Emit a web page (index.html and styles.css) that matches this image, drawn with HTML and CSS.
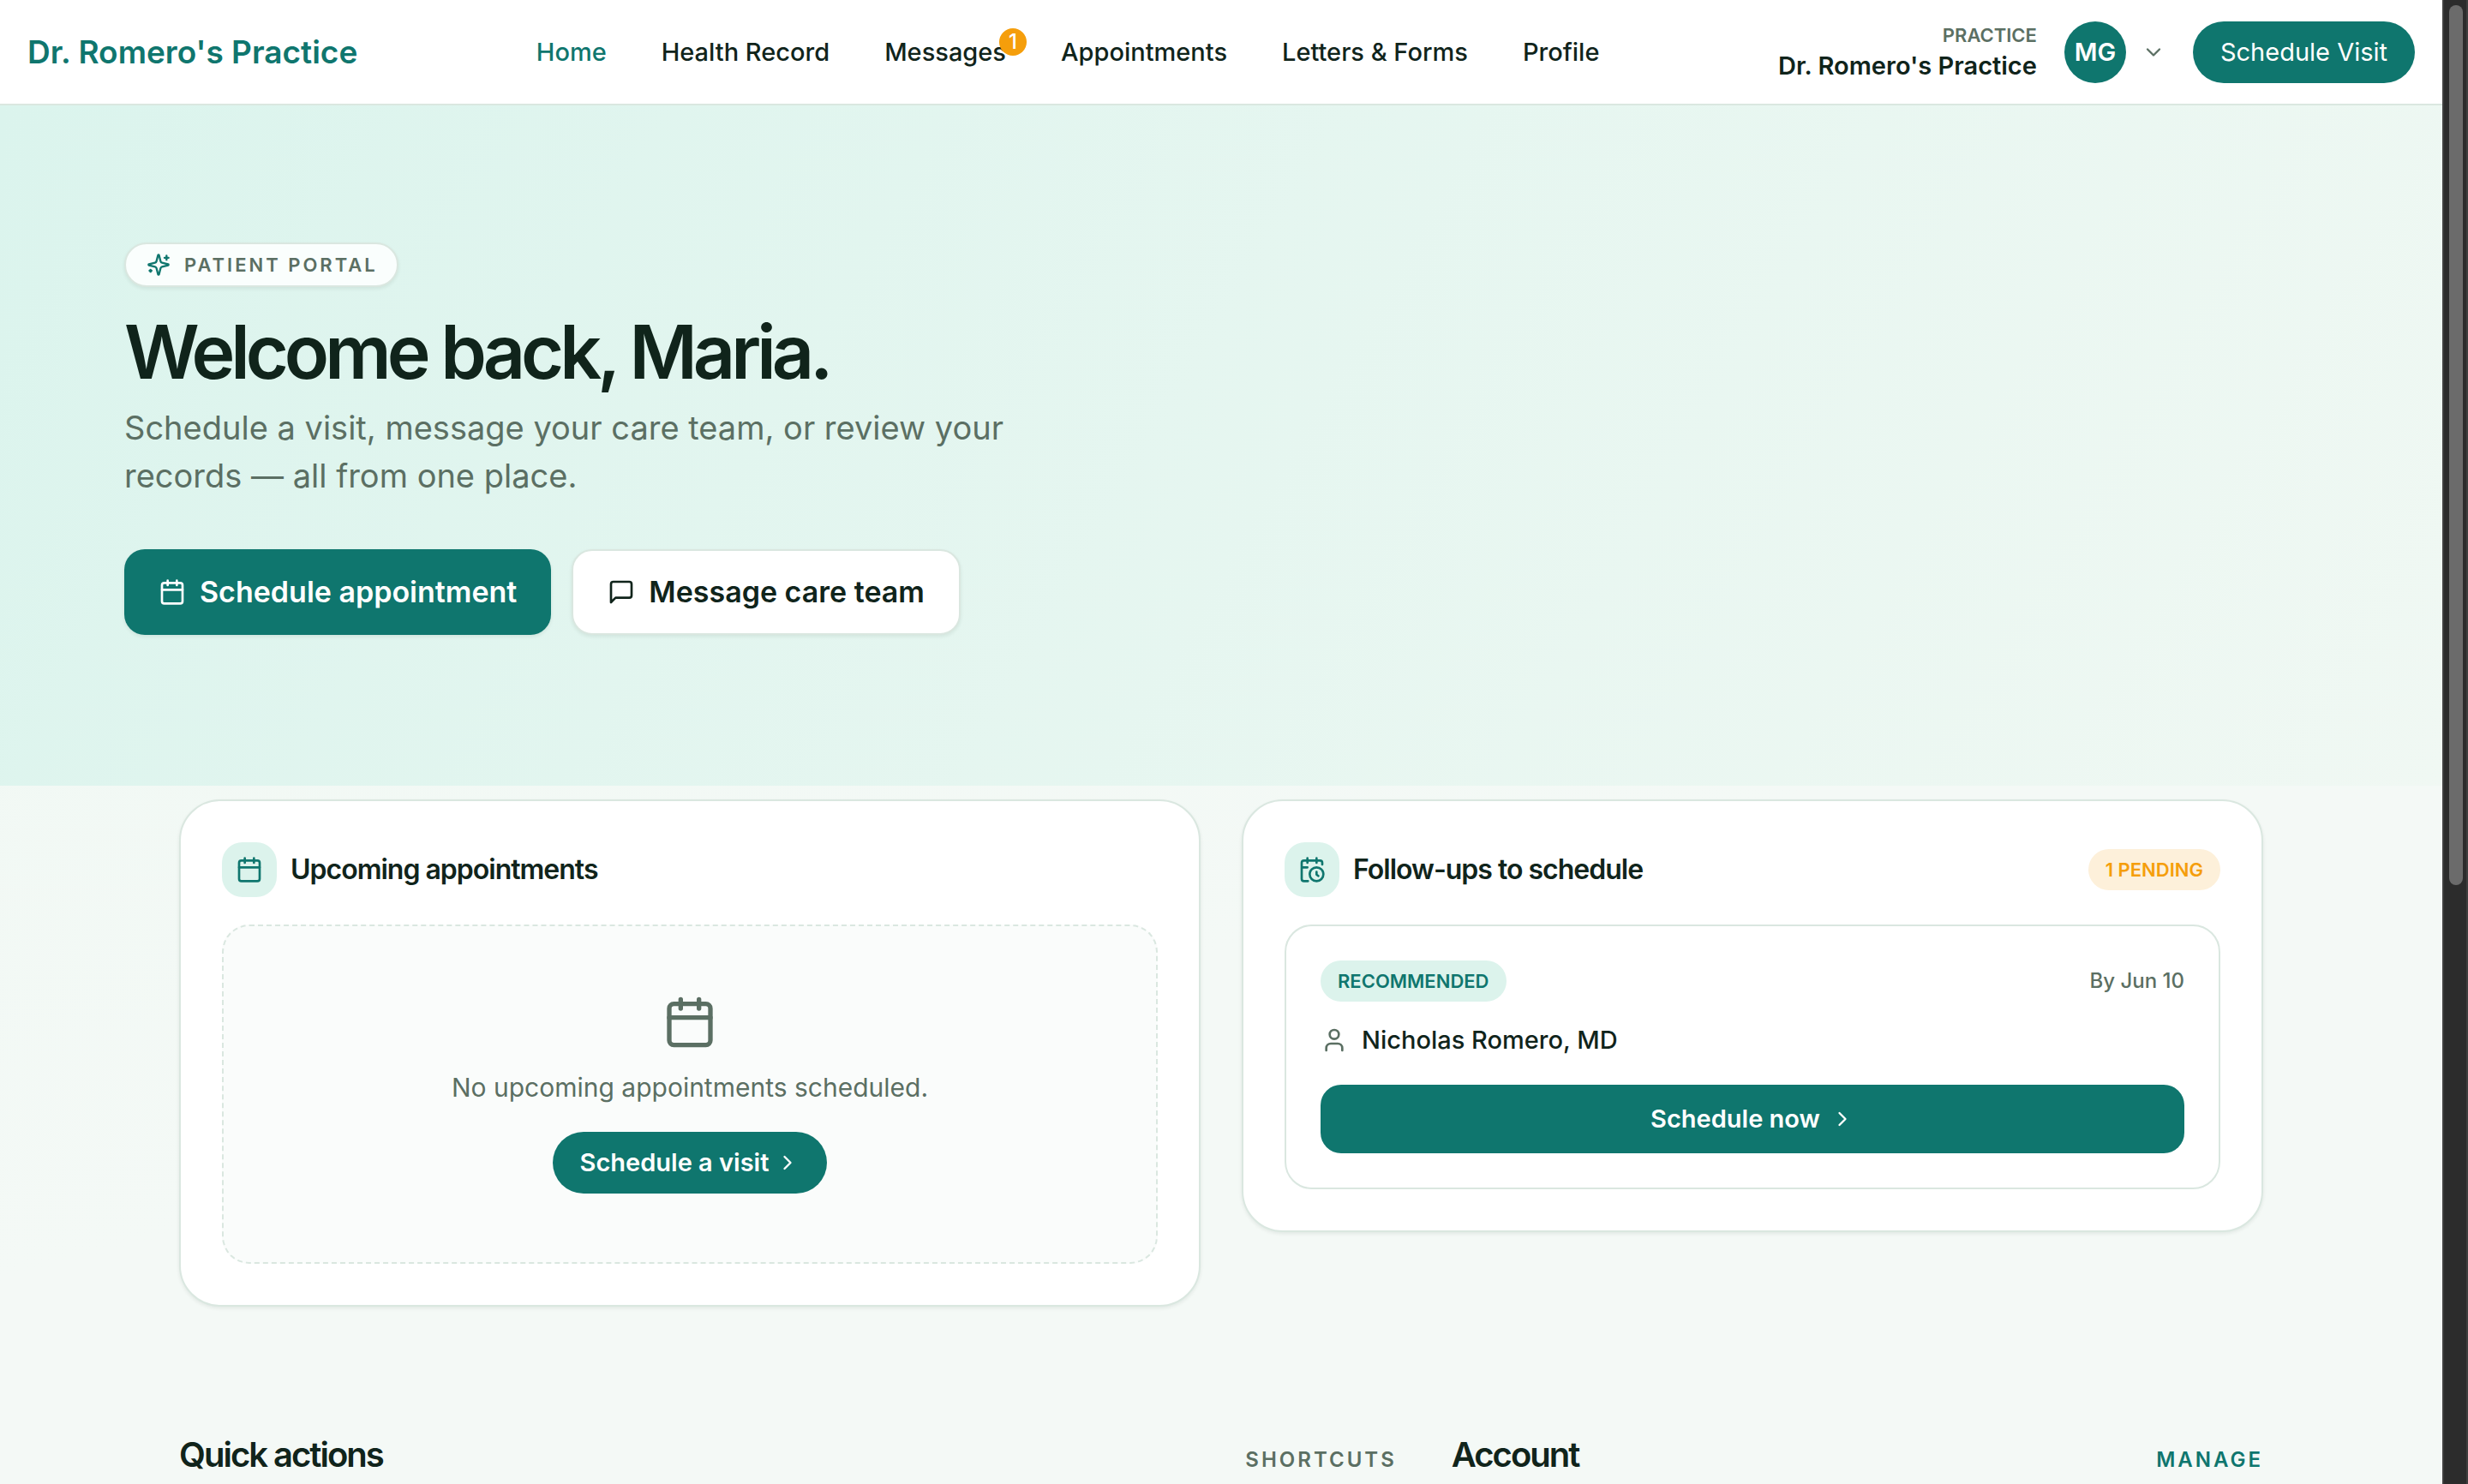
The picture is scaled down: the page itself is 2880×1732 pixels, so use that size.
FILE: index.html
```html
<!DOCTYPE html>
<html lang="en">
<head>
<meta charset="utf-8">
<meta name="viewport" content="width=device-width, initial-scale=1">
<title>Dr. Romero's Practice</title>
<link rel="stylesheet" href="styles.css">
</head>
<body>
<svg class="sprite" aria-hidden="true">
  <symbol id="calendar" viewBox="0 0 24 24"><path d="M8 2v4M16 2v4M3 10h18"/><rect x="3" y="4" width="18" height="18" rx="2"/></symbol>
  <symbol id="calendar-clock" viewBox="0 0 24 24"><path d="M21 7.5V6a2 2 0 0 0-2-2H5a2 2 0 0 0-2 2v14a2 2 0 0 0 2 2h3.5M16 2v4M8 2v4M3 10h5M17.5 17.5 16 16.3V14"/><circle cx="16" cy="16" r="6"/></symbol>
  <symbol id="sparkles" viewBox="0 0 24 24"><path d="M9.937 15.5A2 2 0 0 0 8.5 14.063l-6.135-1.582a.5.5 0 0 1 0-.962L8.5 9.936A2 2 0 0 0 9.937 8.5l1.582-6.135a.5.5 0 0 1 .963 0L14.063 8.5A2 2 0 0 0 15.5 9.937l6.135 1.581a.5.5 0 0 1 0 .964L15.5 14.063a2 2 0 0 0-1.437 1.437l-1.582 6.135a.5.5 0 0 1-.963 0zM20 3v4M22 5h-4M4 17v2M5 18H3"/></symbol>
  <symbol id="message" viewBox="0 0 24 24"><path d="M21 15a2 2 0 0 1-2 2H7l-4 4V5a2 2 0 0 1 2-2h14a2 2 0 0 1 2 2z"/></symbol>
  <symbol id="user" viewBox="0 0 24 24"><path d="M19 21v-2a4 4 0 0 0-4-4H9a4 4 0 0 0-4 4v2"/><circle cx="12" cy="7" r="4"/></symbol>
  <symbol id="chevron-right" viewBox="0 0 24 24"><path d="m9 18 6-6-6-6"/></symbol>
  <symbol id="chevron-down" viewBox="0 0 24 24"><path d="m6 9 6 6 6-6"/></symbol>
</svg>
<div class="window">
  <div class="page">
    <header class="topbar">
      <a class="brand" href="#">Dr. Romero's Practice</a>
      <nav class="nav">
        <a class="nav-link active" href="#">Home</a>
        <a class="nav-link" href="#">Health Record</a>
        <a class="nav-link" href="#">Messages<span class="count">1</span></a>
        <a class="nav-link" href="#">Appointments</a>
        <a class="nav-link" href="#">Letters &amp; Forms</a>
        <a class="nav-link" href="#">Profile</a>
      </nav>
      <div class="account">
        <div class="practice">
          <span class="practice-label">PRACTICE</span>
          <span class="practice-name">Dr. Romero's Practice</span>
        </div>
        <button class="user-menu" type="button" aria-label="Account menu">
          <span class="avatar">MG</span>
          <svg class="icon icon-sm"><use href="#chevron-down"/></svg>
        </button>
        <button class="pill-button pill-light" type="button">Schedule Visit</button>
      </div>
    </header>

    <section class="hero">
      <div class="hero-inner">
        <p class="eyebrow"><svg class="icon icon-md"><use href="#sparkles"/></svg>PATIENT PORTAL</p>
        <h1 class="hero-title">Welcome back, Maria.</h1>
        <p class="hero-text">Schedule a visit, message your care team, or review your records — all from one place.</p>
        <div class="hero-actions">
          <button class="hero-button primary" type="button"><svg class="icon icon-lg"><use href="#calendar"/></svg>Schedule appointment</button>
          <button class="hero-button secondary" type="button"><svg class="icon icon-lg"><use href="#message"/></svg>Message care team</button>
        </div>
      </div>
    </section>

    <main class="content">
      <div class="cards">
        <section class="card">
          <div class="card-head">
            <span class="tile"><svg class="icon icon-lg"><use href="#calendar"/></svg></span>
            <h2 class="card-title">Upcoming appointments</h2>
          </div>
          <div class="empty">
            <svg class="icon icon-xl"><use href="#calendar"/></svg>
            <p class="empty-text">No upcoming appointments scheduled.</p>
            <button class="pill-button" type="button">Schedule a visit<svg class="icon icon-sm"><use href="#chevron-right"/></svg></button>
          </div>
        </section>
        <section class="card">
          <div class="card-head">
            <span class="tile"><svg class="icon icon-lg"><use href="#calendar-clock"/></svg></span>
            <h2 class="card-title">Follow-ups to schedule</h2>
            <span class="badge pending">1 PENDING</span>
          </div>
          <article class="followup">
            <div class="followup-top">
              <span class="badge">RECOMMENDED</span>
              <span class="due">By Jun 10</span>
            </div>
            <p class="doctor"><svg class="icon icon-lg"><use href="#user"/></svg>Nicholas Romero, MD</p>
            <button class="wide-button" type="button">Schedule now<svg class="icon icon-sm"><use href="#chevron-right"/></svg></button>
          </article>
        </section>
      </div>
      <div class="sections">
        <section class="section-head">
          <h2 class="section-title">Quick actions</h2>
          <span class="section-note">SHORTCUTS</span>
        </section>
        <section class="section-head">
          <h2 class="section-title">Account</h2>
          <a class="section-note link" href="#">MANAGE</a>
        </section>
      </div>
    </main>
  </div>
  <div class="scrollbar" aria-hidden="true"><div class="thumb"></div></div>
</div>
</body>
</html>
```
FILE: styles.css
```css
:root {
  --teal: #0f766e;
  --ink: #10241b;
  --muted: #5b6f63;
  --line: #dae7e0;
  --mint: #dcf3ec;
}
* { box-sizing: border-box; }
body {
  margin: 0;
  font-family: Inter, "Liberation Sans", sans-serif;
  font-size: 29px;
  line-height: 40px;
  color: var(--ink);
}
h1, h2, p { margin: 0; }
a { color: inherit; text-decoration: none; }
button { font: inherit; color: inherit; border: 0; padding: 0; background: none; cursor: pointer; }
.sprite { position: absolute; width: 0; height: 0; }
.icon {
  flex: none;
  fill: none;
  stroke: currentColor;
  stroke-width: 2;
  stroke-linecap: round;
  stroke-linejoin: round;
}
.icon-sm { width: 28px; height: 28px; }
.icon-md { width: 28px; height: 28px; color: var(--teal); }
.icon-lg { width: 32px; height: 32px; }
.icon-xl { width: 64px; height: 64px; }

.window { display: flex; height: 100vh; }
.page {
  flex: 1;
  min-width: 0;
  overflow-y: auto;
  scrollbar-width: none;
  background: linear-gradient(165deg, #eef8f2, #f4f9f6 60%);
}
.scrollbar {
  width: 30px;
  padding: 6px 4px 6px 6px;
  background: #2c2c2c;
  border: solid #3f3f3f;
  border-width: 0 2px;
}
.thumb { width: 16px; height: 1027px; max-height: 100%; border-radius: 8px; background: #6b6b6b; }

.topbar {
  display: flex;
  align-items: center;
  justify-content: space-between;
  padding: 25px 32px 24px;
  background: #fff;
  border-bottom: 2px solid var(--line);
}
.brand { font-size: 37px; font-weight: 600; color: var(--teal); }
.nav { display: flex; gap: 64px; }
.nav-link { position: relative; font-weight: 500; }
.nav-link.active { color: var(--teal); }
.count {
  position: absolute;
  top: -8px;
  right: -24px;
  width: 32px;
  height: 32px;
  border-radius: 50%;
  background: #f59e0b;
  color: #fff;
  font-size: 24px;
  line-height: 32px;
  text-align: center;
}
.account { display: flex; align-items: center; gap: 32px; }
.practice { display: flex; flex-direction: column; text-align: right; }
.practice-label { font-size: 22px; line-height: 32px; font-weight: 600; color: var(--muted); }
.practice-name { font-weight: 600; }
.user-menu { display: flex; align-items: center; gap: 18px; color: var(--muted); }
.avatar {
  width: 72px;
  height: 72px;
  border-radius: 50%;
  background: var(--teal);
  color: #fff;
  font-weight: 600;
  line-height: 72px;
}
.pill-button {
  display: flex;
  align-items: center;
  gap: 8px;
  height: 72px;
  padding: 0 32px;
  border-radius: 36px;
  background: var(--teal);
  color: #fff;
  font-weight: 600;
}
.pill-light { font-weight: 400; }

.hero {
  padding: 160px 0 176px;
  background: linear-gradient(120deg, #dbf4ed, #f0f8f3);
}
.hero-inner {
  display: flex;
  flex-direction: column;
  align-items: flex-start;
  max-width: 2560px;
  margin: 0 auto;
}
.eyebrow {
  display: flex;
  align-items: center;
  gap: 16px;
  height: 52px;
  padding: 0 22px 0 24px;
  border: 2px solid var(--line);
  border-radius: 26px;
  background: #fafefd;
  box-shadow: 0 2px 4px #10241b14;
  color: var(--muted);
  font-size: 22px;
  font-weight: 600;
  letter-spacing: 3px;
}
.hero-title {
  margin-top: 32px;
  font-size: 86px;
  line-height: 88px;
  font-weight: 600;
  letter-spacing: -5px;
}
.hero-text {
  max-width: 1100px;
  margin-top: 16px;
  font-size: 38px;
  line-height: 56px;
  color: var(--muted);
}
.hero-actions { display: flex; gap: 24px; margin-top: 58px; }
.hero-button {
  display: flex;
  align-items: center;
  gap: 16px;
  height: 100px;
  padding: 0 40px;
  border-radius: 24px;
  font-size: 34px;
  font-weight: 600;
  box-shadow: 0 2px 4px #10241b14;
}
.primary { background: var(--teal); color: #fff; }
.secondary { background: #fff; border: 2px solid var(--line); }

.content { max-width: 2560px; margin: 0 auto; padding: 16px 64px 64px; }
.cards { display: grid; grid-template-columns: 1fr 1fr; gap: 48px; align-items: start; }
.card {
  padding: 48px;
  background: #fff;
  border: 2px solid var(--line);
  border-radius: 48px;
  box-shadow: 0 2px 4px #10241b14;
}
.card-head { display: flex; align-items: center; gap: 16px; margin-bottom: 32px; }
.tile {
  display: grid;
  place-items: center;
  width: 64px;
  height: 64px;
  border-radius: 24px;
  background: var(--mint);
  color: var(--teal);
}
.card-title { flex: 1; font-size: 32px; font-weight: 600; letter-spacing: -1px; }
.badge {
  padding: 8px 20px;
  border-radius: 24px;
  background: var(--mint);
  color: var(--teal);
  font-size: 22px;
  line-height: 32px;
  font-weight: 600;
}
.pending { background: #fdf0da; color: #f59e0b; }
.empty {
  display: flex;
  flex-direction: column;
  align-items: center;
  padding: 80px;
  border: 2px dashed var(--line);
  border-radius: 32px;
  background: #fafcfb;
  color: var(--muted);
}
.empty-text { margin: 24px 0 32px; font-size: 30px; }
.followup { padding: 40px; border: 2px solid var(--line); border-radius: 32px; }
.followup-top { display: flex; align-items: center; justify-content: space-between; }
.due { font-size: 24px; font-weight: 500; color: var(--muted); }
.doctor { display: flex; align-items: center; gap: 16px; margin: 25px 0 32px; font-weight: 500; }
.doctor .icon { color: var(--muted); }
.wide-button {
  display: flex;
  align-items: center;
  justify-content: center;
  gap: 12px;
  width: 100%;
  height: 80px;
  border-radius: 24px;
  background: var(--teal);
  color: #fff;
  font-weight: 600;
}
.sections { display: grid; grid-template-columns: 3fr 2fr; gap: 64px; margin-top: 149px; }
.section-head { display: flex; align-items: baseline; justify-content: space-between; }
.section-title { font-size: 40px; line-height: 48px; font-weight: 600; letter-spacing: -2px; }
.section-note { font-size: 24px; font-weight: 600; letter-spacing: 3px; color: var(--muted); }
.link { color: var(--teal); }
```
